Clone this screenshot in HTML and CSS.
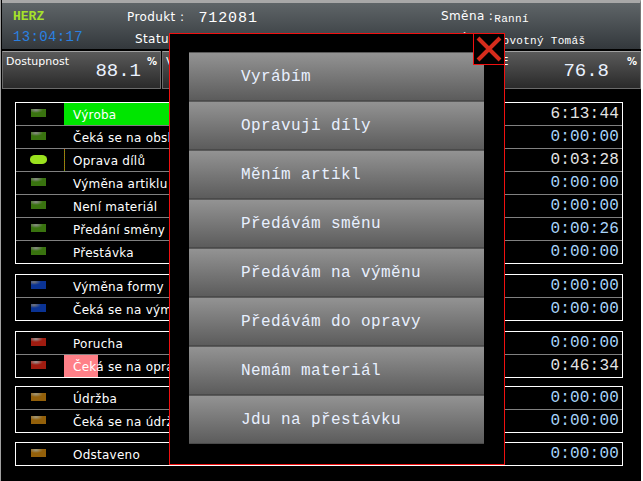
FILE: index.html
```html
<!DOCTYPE html>
<html lang="en">
<head>
    <meta charset="UTF-8">
    <meta name="viewport" content="width=device-width, initial-scale=1.0">
    <title>HERZ - Terminal</title>
    <link rel="stylesheet" href="styles.css">
</head>
<body>
    <header class="top-bar">
        <div class="brand">
            <div class="brand-name">HERZ</div>
            <div class="clock">13:04:17</div>
        </div>
        <div class="info info-product">
            <div class="info-line"><span class="info-label">Produkt :</span><span class="info-big">712081</span></div>
            <div class="info-line info-status"><span class="info-label">Status :</span><span class="info-big">zapracování</span></div>
        </div>
        <div class="info info-shift">
            <div class="info-line"><span class="info-label">Směna :</span><span class="info-small">Ranní</span></div>
            <div class="info-line info-worker"><span class="info-label">Operátor :</span><span class="info-small">Novotný Tomáš</span></div>
        </div>
    </header>

    <section class="kpi-row">
        <div class="kpi"><span class="kpi-label">Dostupnost</span><span class="kpi-value">88.1</span><span class="kpi-unit">%</span></div>
        <div class="kpi"><span class="kpi-label">Výkon</span><span class="kpi-value">92.4</span><span class="kpi-unit">%</span></div>
        <div class="kpi"><span class="kpi-label">Kvalita</span><span class="kpi-value">94.3</span><span class="kpi-unit">%</span></div>
        <div class="kpi"><span class="kpi-label">OEE</span><span class="kpi-value">76.8</span><span class="kpi-unit">%</span></div>
    </section>

    <main class="states">
        <div class="group">
            <div class="row"><span class="led led-green"></span><span class="row-name"><span class="bar bar-green" style="width:105px"></span><span class="row-text">Výroba</span></span><span class="row-time time-white">6:13:44</span></div>
            <div class="row"><span class="led led-green"></span><span class="row-name"><span class="row-text">Čeká se na obsluhu</span></span><span class="row-time">0:00:00</span></div>
            <div class="row row-active"><span class="led led-lime"></span><span class="row-name"><span class="row-text">Oprava dílů</span></span><span class="row-time time-white">0:03:28</span></div>
            <div class="row"><span class="led led-green"></span><span class="row-name"><span class="row-text">Výměna artiklu</span></span><span class="row-time">0:00:00</span></div>
            <div class="row"><span class="led led-green"></span><span class="row-name"><span class="row-text">Není materiál</span></span><span class="row-time">0:00:00</span></div>
            <div class="row"><span class="led led-green"></span><span class="row-name"><span class="row-text">Předání směny</span></span><span class="row-time">0:00:26</span></div>
            <div class="row"><span class="led led-green"></span><span class="row-name"><span class="row-text">Přestávka</span></span><span class="row-time">0:00:00</span></div>
        </div>
        <div class="group">
            <div class="row"><span class="led led-blue"></span><span class="row-name"><span class="row-text">Výměna formy</span></span><span class="row-time">0:00:00</span></div>
            <div class="row"><span class="led led-blue"></span><span class="row-name"><span class="row-text">Čeká se na výměnu</span></span><span class="row-time">0:00:00</span></div>
        </div>
        <div class="group group-tight">
            <div class="row"><span class="led led-red"></span><span class="row-name"><span class="row-text">Porucha</span></span><span class="row-time">0:00:00</span></div>
            <div class="row"><span class="led led-red"></span><span class="row-name"><span class="bar bar-pink" style="width:34px"></span><span class="row-text">Čeká se na opravu</span></span><span class="row-time time-white">0:46:34</span></div>
        </div>
        <div class="group group-mid">
            <div class="row"><span class="led led-brown"></span><span class="row-name"><span class="row-text">Údržba</span></span><span class="row-time">0:00:00</span></div>
            <div class="row"><span class="led led-brown"></span><span class="row-name"><span class="row-text">Čeká se na údržbu</span></span><span class="row-time">0:00:00</span></div>
        </div>
        <div class="group">
            <div class="row"><span class="led led-brown"></span><span class="row-name"><span class="row-text">Odstaveno</span></span><span class="row-time">0:00:00</span></div>
        </div>
    </main>

    <div class="modal">
        <button class="modal-close" type="button">
            <svg width="30" height="30" viewBox="0 0 30 30"><path d="M4 4 L26 26 M26 4 L4 26" stroke="#d62c1c" stroke-width="4" fill="none"/></svg>
        </button>
        <div class="menu">
            <button class="menu-item" type="button">Vyrábím</button>
            <button class="menu-item" type="button">Opravuji díly</button>
            <button class="menu-item" type="button">Měním artikl</button>
            <button class="menu-item" type="button">Předávám směnu</button>
            <button class="menu-item" type="button">Předávám na výměnu</button>
            <button class="menu-item" type="button">Předávám do opravy</button>
            <button class="menu-item" type="button">Nemám materiál</button>
            <button class="menu-item" type="button">Jdu na přestávku</button>
        </div>
    </div>
</body>
</html>
```

FILE: styles.css
```css
html {
    background-color: #fff;
}

body {
    margin: 0;
    width: 641px;
    height: 481px;
    box-sizing: border-box;
    overflow: hidden;
    position: relative;
    padding-left: 1px;
    border-left: 1px solid #a0a0a0;
    background-color: #000;
    color: #fff;
    font-family: "DejaVu Sans", sans-serif;
}

.top-bar {
    height: 46px;
    margin-bottom: 2px;
    border-top: 3px solid #a8a8a8;
    border-right: 1px solid #777;
    background: linear-gradient(#5f6568, #33383c);
    display: flex;
}

.brand {
    width: 125px;
    padding: 7px 0 0 11px;
    box-sizing: border-box;
}

.brand-name {
    color: #a6e22a;
    font-family: "Liberation Mono", monospace;
    font-weight: bold;
    font-size: 13px;
    line-height: 14px;
}

.clock {
    margin-top: 5px;
    color: #2a80e0;
    font-family: "Liberation Mono", monospace;
    font-size: 14px;
    letter-spacing: 0.35px;
    line-height: 16px;
}

.info {
    font-size: 12px;
}

.info-product {
    width: 314px;
}

.info-line {
    display: flex;
    align-items: baseline;
    height: 22px;
    padding-top: 6px;
}

.info-line + .info-line {
    height: 20px;
    padding-top: 0;
}

.info-status {
    padding-left: 8px;
}

.info-label {
    letter-spacing: 0.4px;
}

.info-big {
    margin-left: 14px;
    font-family: "Liberation Mono", monospace;
    font-size: 15px;
    letter-spacing: 0.9px;
    position: relative;
    top: 1px;
}

.info-status .info-big {
    margin-left: 19px;
    top: 4px;
}

.info-small {
    margin-left: 1px;
    font-family: "Liberation Mono", monospace;
    font-size: 11px;
    letter-spacing: 0.3px;
    position: relative;
    top: 2px;
}

.info-worker {
    margin-left: -12px;
}

.kpi-row {
    display: flex;
    gap: 1px;
}

.kpi {
    width: 159px;
    height: 38px;
    box-sizing: border-box;
    border: 1px solid #6a6a6a;
    border-top-color: #a0a0a0;
    background: linear-gradient(#5a5a5a, #2a2a2a);
    position: relative;
}

.kpi-label {
    display: block;
    font-size: 11px;
    margin: 3px 0 0 3px;
}

.kpi-value {
    position: absolute;
    right: 19px;
    top: 8px;
    font-family: "Liberation Mono", monospace;
    font-size: 19px;
    color: #eaf2ff;
}

.kpi:last-child .kpi-value {
    right: 31px;
}

.kpi-unit {
    position: absolute;
    right: 3px;
    top: 4px;
    font-size: 10px;
    font-weight: bold;
}

.states {
    padding: 13px 0 0 13px;
}

.group {
    width: 606px;
    margin-bottom: 10px;
    border: 1px solid #fff;
}

.group-tight {
    margin-bottom: 8px;
}

.group-mid {
    margin-bottom: 9px;
}

.row {
    height: 22px;
    display: flex;
    align-items: center;
    border-top: 1px solid #808080;
}

.row:first-child {
    border-top: none;
}

.led {
    flex: none;
    width: 15px;
    height: 8px;
    margin: 0 18px 3px 15px;
}

.led-green {
    background: radial-gradient(7px 3px at 5px 1px, #8c8c8c, transparent), #39730f;
}

.led-lime {
    width: 17px;
    height: 9px;
    margin: 0 17px 2px 14px;
    border-radius: 5px / 4px;
    background-color: #9be21e;
}

.led-blue {
    background: radial-gradient(7px 3px at 3px 1px, #777, transparent), #0a3394;
}

.led-red {
    background: radial-gradient(7px 3px at 5px 1px, #999, transparent), #a01c10;
}

.led-brown {
    background: radial-gradient(7px 3px at 5px 1px, #a09a80, transparent), #93600a;
}

.row-name {
    flex: 1;
    align-self: stretch;
    position: relative;
    display: flex;
    align-items: center;
    font-size: 12px;
    letter-spacing: 0.25px;
}

.row-active .row-name::before {
    content: "";
    position: absolute;
    left: 0;
    top: 0;
    bottom: 0;
    width: 1px;
    background: repeating-linear-gradient(#c06010 0 1px, #6a9a10 1px 2px);
}

.bar {
    position: absolute;
    left: 0;
    top: 0;
    bottom: 0;
}

.bar-green {
    background-color: #00e600;
}

.bar-pink {
    background-color: #ff8088;
}

.row-text {
    position: relative;
    margin: 1px 0 0 9px;
}

.row-time {
    margin-right: 3px;
    font-family: "Liberation Mono", monospace;
    font-size: 16px;
    letter-spacing: 0.2px;
    color: #a8d4fa;
}

.time-white {
    color: #e4e4e4;
}

.modal {
    position: absolute;
    left: 168px;
    top: 33px;
    width: 295px;
    height: 412px;
    padding: 18px 20px 0 19px;
    border: 1px solid #f01010;
    background-color: #000;
}

.modal-close {
    position: absolute;
    right: -1px;
    top: -1px;
    width: 32px;
    height: 32px;
    padding: 0;
    border: 1px solid #f01010;
    background-color: #000;
    display: flex;
    align-items: center;
    justify-content: center;
}

.menu {
    display: flex;
    flex-direction: column;
}

.menu-item {
    height: 49px;
    padding: 0 0 0 52px;
    border: none;
    border-top: 1px solid #5a5a5a;
    border-bottom: 1px solid #4a4a4a;
    background: linear-gradient(#939393, #5c5c5c);
    color: #e8f0ff;
    font-family: "Liberation Mono", monospace;
    font-size: 16px;
    letter-spacing: 0.4px;
    text-align: left;
}
```
